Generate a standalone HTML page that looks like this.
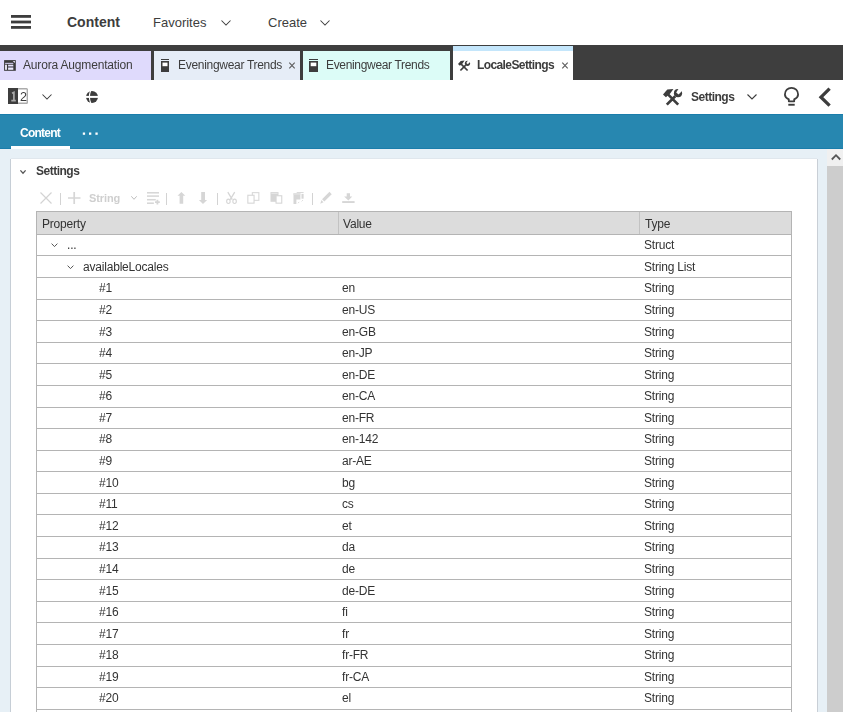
<!DOCTYPE html>
<html><head><meta charset="utf-8">
<style>
*{box-sizing:border-box;margin:0;padding:0}
html,body{width:843px;height:712px;overflow:hidden;background:#fff}
body{position:relative;font-family:"Liberation Sans",sans-serif;color:#3d3d3d}
.a{will-change:transform}
#topbar,#topbar .a{will-change:auto}
.a{position:absolute;white-space:nowrap}
svg{position:absolute;overflow:visible}
#topbar{left:0;top:0;width:843px;height:45px;background:#fff}
#tabbar{left:0;top:45px;width:843px;height:35px;background:#3e3e3e}
.tab{position:absolute;top:6px;height:29px}
#toolbar{left:0;top:80px;width:843px;height:34px;background:#fff}
#bluebar{left:0;top:114px;width:843px;height:35px;background:#2787b0;border-top:1px solid #1a7dab;border-bottom:1px solid #1a7dab}
#content{left:0;top:149px;width:843px;height:563px;background:#e7f0f6}
#panel{left:11px;top:159px;width:806px;height:553px;background:#fff;box-shadow:1px 0 0 #c9cfd6, -1px 0 0 #c6ced6, 0 -1px 0 #e0e7ed}
#sbtrack{left:827px;top:149px;width:16px;height:563px;background:#f0f0f0}
#sbthumb{left:827px;top:166px;width:16px;height:546px;background:#cdcdcd}
.tt{font-size:12px;line-height:13px;letter-spacing:-0.2px;color:#333}
.row{position:absolute;left:36px;width:756px;border-bottom:1px solid #b4b4b4;border-left:1px solid #b4b4b4;border-right:1px solid #b4b4b4}
.dis{color:#cfcfcf}
</style></head><body>

<!-- top bar -->
<div class="a" id="topbar">
  <svg style="left:11px;top:15px" width="20" height="14" viewBox="0 0 20 14"><rect x="0" y="0" width="20" height="2.8" fill="#3d3d3d"/><rect x="0" y="5.6" width="20" height="2.8" fill="#3d3d3d"/><rect x="0" y="11" width="20" height="2.8" fill="#3d3d3d"/></svg>
  <div class="a" style="left:67px;top:14px;font-size:14px;font-weight:bold;line-height:17px">Content</div>
  <div class="a" style="left:153px;top:15px;font-size:13px;line-height:16px">Favorites</div>
  <svg style="left:221px;top:20px" width="10" height="6" viewBox="0 0 10 6"><path d="M0.5 0.5 L5 5 L9.5 0.5" fill="none" stroke="#3d3d3d" stroke-width="1.05"/></svg>
  <div class="a" style="left:268px;top:15px;font-size:13px;line-height:16px">Create</div>
  <svg style="left:319.5px;top:20px" width="10" height="6" viewBox="0 0 10 6"><path d="M0.5 0.5 L5 5 L9.5 0.5" fill="none" stroke="#3d3d3d" stroke-width="1.05"/></svg>
</div>

<!-- tab bar -->
<div class="a" id="tabbar">
  <div class="tab" style="left:0;width:151px;background:#dfdafc">
    <svg style="left:4px;top:9px" width="12" height="11" viewBox="0 0 12 11"><rect x="0.1" y="0.1" width="11.7" height="10.7" fill="#3a3a3a"/><path d="M8.7 0.9 L10.9 0.9 L10.9 3.0 Z" fill="#ece9fd"/><rect x="1.1" y="2.8" width="8.2" height="1.2" fill="#bdb9d6"/><rect x="1.1" y="4.7" width="1.8" height="5.1" fill="#f3f1ff"/><rect x="4.1" y="4.7" width="5.2" height="1.5" fill="#e6e3fb"/><rect x="4.1" y="6.2" width="5.2" height="1.7" fill="#8d8b9e"/><rect x="4.1" y="7.9" width="5.2" height="1.9" fill="#ecebfd"/></svg>
    <div class="a" style="left:23px;top:7px;font-size:12px;line-height:14px;letter-spacing:-0.17px">Aurora Augmentation</div>
  </div>
  <div class="tab" style="left:154px;width:146px;background:#e6edf7">
    <svg style="left:7px;top:8px" width="8" height="13" viewBox="0 0 8 13"><rect x="0" y="0" width="8" height="1" fill="#3d3d3d"/><rect x="0" y="2" width="8" height="11" fill="#3d3d3d"/><rect x="1.5" y="3.6" width="5" height="3.6" fill="#fff"/></svg>
    <div class="a" style="left:24px;top:7px;font-size:12px;line-height:14px;letter-spacing:-0.3px">Eveningwear Trends</div>
    <svg style="left:135px;top:11px" width="6" height="7" viewBox="0 0 6 7"><path d="M0.3 0.6 L5.7 6.4 M5.7 0.6 L0.3 6.4" stroke="#5c5c5c" stroke-width="1.1"/></svg>
  </div>
  <div class="tab" style="left:303px;width:147px;background:#dcfcf7">
    <svg style="left:6px;top:8px" width="9" height="13" viewBox="0 0 9 13"><rect x="0" y="0" width="9" height="1" fill="#3d3d3d"/><rect x="0" y="2" width="9" height="11" fill="#3d3d3d"/><rect x="1.7" y="3.6" width="5.6" height="3.6" fill="#fff"/></svg>
    <div class="a" style="left:23px;top:7px;font-size:12px;line-height:14px;letter-spacing:-0.33px">Eveningwear Trends</div>
  </div>
  <div class="tab" style="left:453px;top:1px;height:34px;width:120px;background:#fff;border-top:5px solid #c4e6fb">
    <svg style="left:5px;top:9px" width="12" height="11.4" viewBox="0 0 19 18"><path d="M3.8 16.6 L12.2 8.2 M15.2 16.6 L5 6.4" stroke="#3d3d3d" stroke-width="2.7"/><path d="M0 6.4 L4.3 1.4 L10.4 0.9 L7.2 5.4 L2.9 9.2 Z" fill="#3d3d3d"/><circle cx="15" cy="5.2" r="4.1" fill="#3d3d3d"/><path d="M13.2 4.6 L15.6 6.6 L20.5 1.5 L17 -1.5 Z" fill="#fff"/></svg>
    <div class="a" style="left:24px;top:7px;font-size:12px;font-weight:bold;line-height:14px;letter-spacing:-0.6px">LocaleSettings</div>
    <svg style="left:109px;top:11px" width="6" height="7" viewBox="0 0 6 7"><path d="M0.3 0.6 L5.7 6.4 M5.7 0.6 L0.3 6.4" stroke="#5c5c5c" stroke-width="1.1"/></svg>
  </div>
</div>

<!-- toolbar -->
<div class="a" id="toolbar">
  <svg style="left:8px;top:8px" width="20" height="16" viewBox="0 0 20 16"><rect x="0.7" y="0.7" width="18.6" height="14.6" rx="0.8" fill="#fff" stroke="#ababab" stroke-width="1.4"/><rect x="0" y="0" width="10" height="16" fill="#3d3d3d"/><path d="M4 5.3 L5.9 4.4 L5.9 12.6 M3.3 12.7 L7.8 12.7" fill="none" stroke="#a9a9a9" stroke-width="1.7"/></svg>
  <div class="a" style="left:19.5px;top:10px;font-size:12.6px;line-height:14px;color:#3d3d3d">2</div>
  <svg style="left:41.5px;top:94px;top:14px" width="10" height="6" viewBox="0 0 10 6"><path d="M0.5 0.5 L5 5 L9.5 0.5" fill="none" stroke="#3d3d3d" stroke-width="1.05"/></svg>
  <svg style="left:86px;top:11px" width="12" height="12" viewBox="0 0 12 12"><circle cx="6" cy="6" r="6" fill="#3d3d3d"/><rect x="-1" y="4.9" width="14" height="2" fill="#fff"/><path d="M4.6 -0.3 Q2.1 6 4.8 12.3" stroke="#fff" stroke-width="1.1" fill="none"/></svg>

  <svg style="left:663px;top:8px" width="19" height="18" viewBox="0 0 19 18"><path d="M3.8 16.6 L12.2 8.2 M15.2 16.6 L5 6.4" stroke="#3d3d3d" stroke-width="2.7"/><path d="M0 6.4 L4.3 1.4 L10.4 0.9 L7.2 5.4 L2.9 9.2 Z" fill="#3d3d3d"/><circle cx="15" cy="5.2" r="4.1" fill="#3d3d3d"/><path d="M13.2 4.6 L15.6 6.6 L20.5 1.5 L17 -1.5 Z" fill="#fff"/></svg>
  <div class="a" style="left:691px;top:10px;font-size:12px;font-weight:bold;line-height:15px;letter-spacing:-0.5px">Settings</div>
  <svg style="left:747px;top:14px" width="10" height="6" viewBox="0 0 10 6"><path d="M0.5 0.5 L5 5 L9.5 0.5" fill="none" stroke="#3d3d3d" stroke-width="1.1"/></svg>
  <svg style="left:784px;top:7px" width="15" height="19" viewBox="0 0 15 19"><path d="M4.8 14.3 L4.8 12.4 C2.2 11 0.9 9.4 0.9 7.4 A6.6 6.6 0 0 1 14.1 7.4 C14.1 9.4 12.8 11 10.2 12.4 L10.2 14.3 Z" fill="none" stroke="#3d3d3d" stroke-width="1.8" stroke-linejoin="round"/><rect x="4.3" y="16.8" width="6.4" height="1.9" fill="#3d3d3d"/></svg>
  <svg style="left:819px;top:7.5px" width="12" height="18" viewBox="0 0 12 18"><path d="M10.6 0.7 L2.0 9.2 L10.6 17.7" fill="none" stroke="#3d3d3d" stroke-width="3.3"/></svg>
</div>

<!-- blue bar -->
<div class="a" id="bluebar">
  <div class="a" style="left:20px;top:11px;font-size:12px;font-weight:bold;line-height:15px;color:#fff;letter-spacing:-0.75px">Content</div>
  <div class="a" style="left:11px;top:31px;width:59px;height:3px;background:#fff"></div>
  <svg style="left:82px;top:17px" width="18" height="3" viewBox="0 0 18 3"><rect x="0.8" y="0.5" width="2.3" height="2.3" fill="#fff"/><rect x="7" y="0.5" width="2.3" height="2.3" fill="#fff"/><rect x="13.4" y="0.5" width="2.3" height="2.3" fill="#fff"/></svg>
</div>

<!-- content -->
<div class="a" id="content"></div>
<div class="a" id="panel"></div>
<div class="a" id="sbtrack"></div>
<div class="a" id="sbthumb"></div>
<svg style="left:831px;top:154px" width="10" height="6" viewBox="0 0 10 6"><path d="M0.8 5.5 L5 1.2 L9.2 5.5" fill="none" stroke="#555" stroke-width="1.8"/></svg>

<!-- settings header -->
<svg style="left:20px;top:170px" width="6" height="4" viewBox="0 0 6 4"><path d="M0.4 0.4 L3 3.2 L5.6 0.4" fill="none" stroke="#555" stroke-width="1.3"/></svg>
<div class="a" style="left:36px;top:164px;font-size:12px;font-weight:bold;line-height:15px;letter-spacing:-0.5px">Settings</div>

<!-- table toolbar -->
<div id="ttb">
  <svg style="left:40.2px;top:192px" width="12" height="12" viewBox="0 0 12 12"><path d="M0.5 0.5 L11.5 11.5 M11.5 0.5 L0.5 11.5" stroke="#d3d3d3" stroke-width="1.2"/></svg>
  <div class="a" style="left:60px;top:193px;width:1px;height:12px;background:#d3d3d3"></div>
  <svg style="left:68px;top:192px" width="12" height="12" viewBox="0 0 12 12"><path d="M6.2 0 L6.2 12 M0 6 L12.5 6" stroke="#d6d6d6" stroke-width="1.7"/></svg>
  <div class="a dis" style="left:89px;top:191px;font-size:11px;font-weight:bold;line-height:14px;letter-spacing:-0.1px">String</div>
  <svg style="left:131px;top:196px" width="6" height="4" viewBox="0 0 6 4"><path d="M0.3 0.3 L3 3.3 L5.7 0.3" fill="none" stroke="#bdbdbd" stroke-width="1"/></svg>
  <svg style="left:147px;top:192px" width="13" height="13" viewBox="0 0 13 13"><rect x="0" y="0.05" width="12" height="1.5" fill="#d6d6d6"/><rect x="0" y="3.35" width="12" height="1.5" fill="#d6d6d6"/><rect x="0" y="6.95" width="8.8" height="1.5" fill="#d6d6d6"/><rect x="0" y="10.45" width="6.9" height="1.5" fill="#d6d6d6"/><path d="M10.4 7.7 L10.4 12.5 M8 10.1 L12.8 10.1" stroke="#d6d6d6" stroke-width="1.8"/></svg>
  <div class="a" style="left:166px;top:193px;width:1px;height:12px;background:#d3d3d3"></div>
  <svg style="left:176.5px;top:192px" width="9" height="12" viewBox="0 0 9 12"><path d="M4.4 0 L8.3 3.8 L6.2 3.8 L6.2 11.8 L2.6 11.8 L2.6 3.8 L0.5 3.8 Z" fill="#d6d6d6"/></svg>
  <svg style="left:199px;top:192px" width="9" height="12" viewBox="0 0 9 12"><path d="M2.2 0 L6 0 L6 7.9 L8.1 7.9 L4 11.9 L-0.1 7.9 L2.2 7.9 Z" fill="#d6d6d6"/></svg>
  <div class="a" style="left:217px;top:193px;width:1px;height:12px;background:#d3d3d3"></div>
  <svg style="left:225.5px;top:192px" width="11" height="12" viewBox="0 0 11 12"><path d="M1.8 0.2 L6.3 7.6 M8.7 0.2 L4.2 7.6" stroke="#d6d6d6" stroke-width="1.3"/><ellipse cx="2.4" cy="9.3" rx="1.75" ry="2.2" fill="none" stroke="#d6d6d6" stroke-width="1.1"/><ellipse cx="8.6" cy="9.3" rx="1.75" ry="2.2" fill="none" stroke="#d6d6d6" stroke-width="1.1"/></svg>
  <svg style="left:247px;top:192px" width="13" height="12" viewBox="0 0 13 12"><rect x="5.35" y="0.65" width="6.5" height="7.7" fill="none" stroke="#d9d9d9" stroke-width="1.1"/><rect x="0.85" y="3.25" width="6.2" height="7.9" fill="#fff" stroke="#d6d6d6" stroke-width="1.1"/></svg>
  <svg style="left:269.5px;top:192px" width="13" height="12" viewBox="0 0 13 12"><rect x="0.5" y="0.1" width="8" height="9.7" fill="#d6d6d6"/><rect x="1.4" y="1.2" width="6.2" height="0.8" fill="#eaeaea"/><rect x="6.05" y="3.75" width="5.7" height="7.4" fill="#fff" stroke="#d6d6d6" stroke-width="1.1"/></svg>
  <svg style="left:292.5px;top:192px" width="11" height="12" viewBox="0 0 11 12"><rect x="3.7" y="0" width="6.9" height="0.9" fill="#d6d6d6"/><path d="M0.5 1.2 L7.4 1.2 L7.4 7.6 L3.4 7.6 L3.4 11.9 L0.5 11.9 Z" fill="#d6d6d6"/><rect x="0.5" y="1.2" width="6.9" height="1.6" fill="#e2e2e2"/><rect x="8.5" y="1.9" width="2.1" height="4.8" fill="#d6d6d6"/><path d="M5.1 11.2 L6.1 9.9 M8.6 9.4 L9.9 8.1" stroke="#dcdcdc" stroke-width="1"/></svg>
  <div class="a" style="left:312px;top:193px;width:1px;height:12px;background:#d3d3d3"></div>
  <svg style="left:320px;top:192px" width="12" height="12" viewBox="0 0 12 12"><path d="M4.33 9.53 L2.07 7.27 L9.47 -0.13 L11.73 2.13 Z" fill="#d6d6d6"/><path d="M1.4 8.1 L3.5 10.2 L0.3 11.7 Z" fill="#d6d6d6"/></svg>
  <svg style="left:342px;top:192px" width="13" height="12" viewBox="0 0 13 12"><path d="M4.7 1.2 L8 1.2 L8 4.5 L10.3 4.5 L6.35 8.4 L2.1 4.5 L4.7 4.5 Z" fill="#d6d6d6"/><rect x="0.2" y="9.1" width="12.4" height="1.9" fill="#d6d6d6"/></svg>
</div>

<!-- table -->
<div class="a" id="thead" style="left:36px;top:211px;width:756px;height:24px;background:#dcdcdc;border:1px solid #b4b4b4">
  <div class="a tt" style="left:5px;top:6px">Property</div>
  <div class="a" style="left:301px;top:0;width:1px;height:22px;background:#c2c2c2"></div>
  <div class="a tt" style="left:306px;top:6px">Value</div>
  <div class="a" style="left:602px;top:0;width:1px;height:22px;background:#c2c2c2"></div>
  <div class="a tt" style="left:608px;top:6px">Type</div>
</div>
<div id="rows">
<div class="row" style="top:235px;height:21px"><svg style="left:13.5px;top:8px" width="7" height="5" viewBox="0 0 7 5"><path d="M0.6 0.6 L3.5 3.6 L6.4 0.6" fill="none" stroke="#555" stroke-width="1"/></svg><div class="a tt" style="left:29.5px;top:0px;line-height:20px">...</div><div class="a tt" style="left:607px;top:0px;line-height:20px">Struct</div></div>
<div class="row" style="top:256px;height:22px"><svg style="left:30px;top:8.5px" width="7" height="5" viewBox="0 0 7 5"><path d="M0.6 0.6 L3.5 3.6 L6.4 0.6" fill="none" stroke="#555" stroke-width="1"/></svg><div class="a tt" style="left:45.5px;top:1px;line-height:21px">availableLocales</div><div class="a tt" style="left:607px;top:1px;line-height:21px">String List</div></div>
<div class="row" style="top:278px;height:22px"><div class="a tt" style="left:62px;top:0px;line-height:21px">#1</div><div class="a tt" style="left:305px;top:0px;line-height:21px">en</div><div class="a tt" style="left:607px;top:0px;line-height:21px">String</div></div>
<div class="row" style="top:300px;height:21px"><div class="a tt" style="left:62px;top:0px;line-height:20px">#2</div><div class="a tt" style="left:305px;top:0px;line-height:20px">en-US</div><div class="a tt" style="left:607px;top:0px;line-height:20px">String</div></div>
<div class="row" style="top:321px;height:22px"><div class="a tt" style="left:62px;top:1px;line-height:21px">#3</div><div class="a tt" style="left:305px;top:1px;line-height:21px">en-GB</div><div class="a tt" style="left:607px;top:1px;line-height:21px">String</div></div>
<div class="row" style="top:343px;height:21px"><div class="a tt" style="left:62px;top:0px;line-height:20px">#4</div><div class="a tt" style="left:305px;top:0px;line-height:20px">en-JP</div><div class="a tt" style="left:607px;top:0px;line-height:20px">String</div></div>
<div class="row" style="top:364px;height:22px"><div class="a tt" style="left:62px;top:1px;line-height:21px">#5</div><div class="a tt" style="left:305px;top:1px;line-height:21px">en-DE</div><div class="a tt" style="left:607px;top:1px;line-height:21px">String</div></div>
<div class="row" style="top:386px;height:22px"><div class="a tt" style="left:62px;top:0px;line-height:21px">#6</div><div class="a tt" style="left:305px;top:0px;line-height:21px">en-CA</div><div class="a tt" style="left:607px;top:0px;line-height:21px">String</div></div>
<div class="row" style="top:408px;height:21px"><div class="a tt" style="left:62px;top:0px;line-height:20px">#7</div><div class="a tt" style="left:305px;top:0px;line-height:20px">en-FR</div><div class="a tt" style="left:607px;top:0px;line-height:20px">String</div></div>
<div class="row" style="top:429px;height:22px"><div class="a tt" style="left:62px;top:0px;line-height:21px">#8</div><div class="a tt" style="left:305px;top:0px;line-height:21px">en-142</div><div class="a tt" style="left:607px;top:0px;line-height:21px">String</div></div>
<div class="row" style="top:451px;height:21px"><div class="a tt" style="left:62px;top:0px;line-height:20px">#9</div><div class="a tt" style="left:305px;top:0px;line-height:20px">ar-AE</div><div class="a tt" style="left:607px;top:0px;line-height:20px">String</div></div>
<div class="row" style="top:472px;height:22px"><div class="a tt" style="left:62px;top:1px;line-height:21px">#10</div><div class="a tt" style="left:305px;top:1px;line-height:21px">bg</div><div class="a tt" style="left:607px;top:1px;line-height:21px">String</div></div>
<div class="row" style="top:494px;height:21px"><div class="a tt" style="left:62px;top:0px;line-height:20px">#11</div><div class="a tt" style="left:305px;top:0px;line-height:20px">cs</div><div class="a tt" style="left:607px;top:0px;line-height:20px">String</div></div>
<div class="row" style="top:515px;height:22px"><div class="a tt" style="left:62px;top:1px;line-height:21px">#12</div><div class="a tt" style="left:305px;top:1px;line-height:21px">et</div><div class="a tt" style="left:607px;top:1px;line-height:21px">String</div></div>
<div class="row" style="top:537px;height:22px"><div class="a tt" style="left:62px;top:0px;line-height:21px">#13</div><div class="a tt" style="left:305px;top:0px;line-height:21px">da</div><div class="a tt" style="left:607px;top:0px;line-height:21px">String</div></div>
<div class="row" style="top:559px;height:21px"><div class="a tt" style="left:62px;top:0px;line-height:20px">#14</div><div class="a tt" style="left:305px;top:0px;line-height:20px">de</div><div class="a tt" style="left:607px;top:0px;line-height:20px">String</div></div>
<div class="row" style="top:580px;height:22px"><div class="a tt" style="left:62px;top:1px;line-height:21px">#15</div><div class="a tt" style="left:305px;top:1px;line-height:21px">de-DE</div><div class="a tt" style="left:607px;top:1px;line-height:21px">String</div></div>
<div class="row" style="top:602px;height:21px"><div class="a tt" style="left:62px;top:0px;line-height:20px">#16</div><div class="a tt" style="left:305px;top:0px;line-height:20px">fi</div><div class="a tt" style="left:607px;top:0px;line-height:20px">String</div></div>
<div class="row" style="top:623px;height:22px"><div class="a tt" style="left:62px;top:1px;line-height:21px">#17</div><div class="a tt" style="left:305px;top:1px;line-height:21px">fr</div><div class="a tt" style="left:607px;top:1px;line-height:21px">String</div></div>
<div class="row" style="top:645px;height:22px"><div class="a tt" style="left:62px;top:0px;line-height:21px">#18</div><div class="a tt" style="left:305px;top:0px;line-height:21px">fr-FR</div><div class="a tt" style="left:607px;top:0px;line-height:21px">String</div></div>
<div class="row" style="top:667px;height:21px"><div class="a tt" style="left:62px;top:0px;line-height:20px">#19</div><div class="a tt" style="left:305px;top:0px;line-height:20px">fr-CA</div><div class="a tt" style="left:607px;top:0px;line-height:20px">String</div></div>
<div class="row" style="top:688px;height:22px"><div class="a tt" style="left:62px;top:0px;line-height:21px">#20</div><div class="a tt" style="left:305px;top:0px;line-height:21px">el</div><div class="a tt" style="left:607px;top:0px;line-height:21px">String</div></div>
<div class="row" style="top:710px;height:21px"><div class="a tt" style="left:62px;top:0px;line-height:20px">#21</div><div class="a tt" style="left:305px;top:0px;line-height:20px">es</div><div class="a tt" style="left:607px;top:0px;line-height:20px">String</div></div>
</div>

</body></html>
